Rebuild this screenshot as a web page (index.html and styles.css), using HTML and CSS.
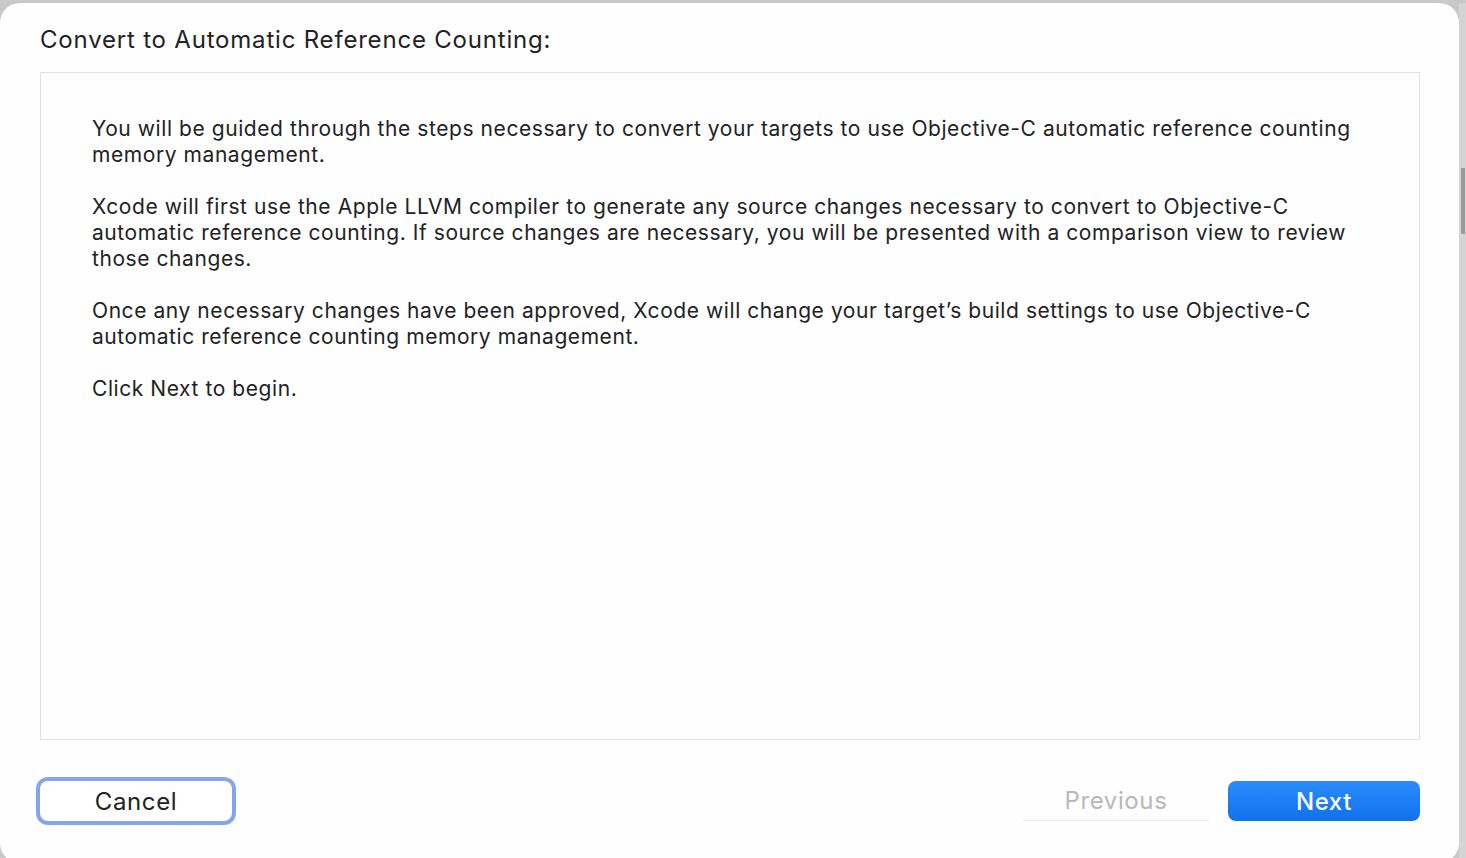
FILE: index.html
```html
<!DOCTYPE html>
<html lang="en">
<head>
    <meta charset="UTF-8">
    <title>Convert to Automatic Reference Counting</title>
    <link rel="stylesheet" href="styles.css">
</head>
<body>
    <div class="sheet">
        <h1 class="sheet-title">Convert to Automatic Reference Counting:</h1>

        <div class="content-box">
            <p>You will be guided through the steps necessary to convert your targets to use Objective-C automatic reference counting memory management.</p>
            <p>Xcode will first use the Apple LLVM compiler to generate any source changes necessary to convert to Objective-C automatic reference counting. If source changes are necessary, you will be presented with a comparison view to review those changes.</p>
            <p>Once any necessary changes have been approved, Xcode will change your target’s build settings to use Objective-C automatic reference counting memory management.</p>
            <p>Click Next to begin.</p>
        </div>

        <div class="button-bar">
            <button class="btn btn-cancel">Cancel</button>
            <div class="spacer"></div>
            <button class="btn btn-previous" disabled>Previous</button>
            <button class="btn btn-next">Next</button>
        </div>
    </div>
    <div class="scroll-strip">
        <div class="scroll-thumb"></div>
    </div>
</body>
</html>
```

FILE: styles.css
```css
:root {
    --sheet-bg: #fefefe;
    --outside: #c9c9c9;
    --border: #e2e2e2;
    --text: #222224;
    --accent: #1a80f7;
}

* {
    margin: 0;
    padding: 0;
    box-sizing: border-box;
}

body {
    font-family: Inter, "Liberation Sans", sans-serif;
    background-color: var(--outside);
    color: var(--text);
    height: 100vh;
    overflow: hidden;
    display: flex;
    padding-top: 3px;
}

.sheet {
    width: 1459px;
    height: 860px;
    background-color: var(--sheet-bg);
    border-radius: 20px;
    padding: 24px 0 0 40px;
    display: flex;
    flex-direction: column;
}

.sheet-title {
    font-size: 24px;
    font-weight: 400;
    letter-spacing: 0.8px;
    line-height: 25px;
    margin-bottom: 20px;
}

.content-box {
    width: 1380px;
    height: 668px;
    border: 1px solid var(--border);
    padding: 43px 40px 0 51px;
}

.content-box p {
    font-size: 21px;
    letter-spacing: 0.57px;
    line-height: 26px;
    margin-bottom: 26px;
}

.button-bar {
    display: flex;
    align-items: center;
    width: 1380px;
    margin-top: 41px;
}

.spacer {
    flex: 1;
}

.btn {
    font-family: inherit;
    font-size: 24px;
    letter-spacing: 0.6px;
    height: 40px;
    border-radius: 8px;
    border: none;
    background: none;
    color: var(--text);
}

.btn-cancel {
    width: 192px;
    background-color: #ffffff;
    box-shadow: 0 0 0 4px #84a5ee;
}

.btn-previous {
    width: 186px;
    color: #b8b8b8;
    border-radius: 0;
    border-bottom: 1px solid #ececec;
    margin-right: 19px;
}

.btn-next {
    width: 192px;
    color: #ffffff;
    font-weight: 500;
    background: linear-gradient(#2a8cfb, #0f72f0);
}

.scroll-strip {
    flex: 1;
    background-color: #d4d4d4;
    padding-top: 165px;
}

.scroll-thumb {
    width: 4px;
    height: 66px;
    margin-left: 2px;
    background-color: #9a9a9a;
}
```
